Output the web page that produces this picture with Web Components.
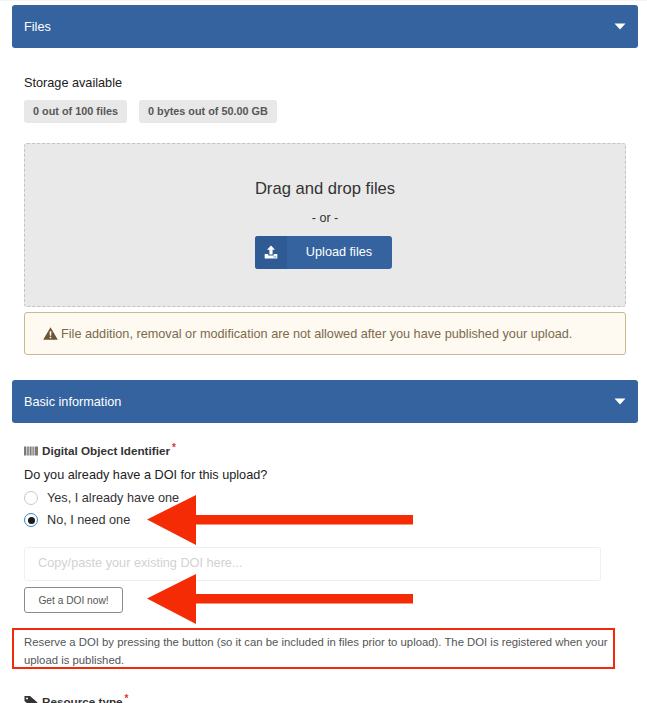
<!DOCTYPE html>
<html>
<head>
<meta charset="utf-8">
<style>
    html, body { margin: 0; height: 703px; overflow: hidden; background: #fff; }
    body { font-family: "Liberation Sans", Arial, sans-serif; font-size: 12.7px; color: #212121; }
</style>
</head>
<body>
<deposit-page>
    <section-bar>Files</section-bar>
    <plain-text top="28" height="15">Storage available</plain-text>
    <storage-badges>
        <grey-badge>0 out of 100 files</grey-badge>
        <grey-badge>0 bytes out of 50.00 GB</grey-badge>
    </storage-badges>
    <drop-zone></drop-zone>
    <warn-box>File addition, removal or modification are not allowed after you have published your upload.</warn-box>
    <section-bar style="margin-top:25px">Basic information</section-bar>
    <doi-field></doi-field>
    <field-label icon="tag" style="margin:25px 0 0 24px">Resource type</field-label>
    <red-arrow style="left:147px;top:495px"></red-arrow>
    <red-arrow style="left:147px;top:574px"></red-arrow>
</deposit-page>

<script>
class DepositPage extends HTMLElement {
    connectedCallback() {
        const shadowRoot = this.attachShadow({mode: 'open'});
        shadowRoot.innerHTML = `
            <style>
                :host { display: block; position: relative; padding-top: 5px; }
                #rule { position: absolute; top: 0; left: 0; right: 0; height: 1px; background: #f4f4f4; }
            </style>
            <div id="rule"></div>
            <slot></slot>
        `;
    }
}

class SectionBar extends HTMLElement {
    connectedCallback() {
        const shadowRoot = this.attachShadow({mode: 'open'});
        shadowRoot.innerHTML = `
            <style>
                :host {
                    display: flex;
                    align-items: center;
                    justify-content: space-between;
                    height: 43px;
                    margin: 0 9px 0 12px;
                    padding: 0 12px;
                    box-sizing: border-box;
                    background: #35639f;
                    border-radius: 3px;
                    color: #fff;
                    font-size: 12.7px;
                }
                svg { display: block; margin-top: -1px; }
            </style>
            <slot></slot>
            <svg width="12" height="7" viewBox="0 0 12 7"><path d="M0.5 0.5H11.5L6 6.5Z" fill="#fff"/></svg>
        `;
    }
}

class PlainText extends HTMLElement {
    connectedCallback() {
        const shadowRoot = this.attachShadow({mode: 'open'});
        shadowRoot.innerHTML = `
            <style>
                :host { display: block; margin: ${this.getAttribute('top')}px 0 0 24px; line-height: ${this.getAttribute('height')}px; color: #212121; }
            </style>
            <slot></slot>
        `;
    }
}

class StorageBadges extends HTMLElement {
    connectedCallback() {
        const shadowRoot = this.attachShadow({mode: 'open'});
        shadowRoot.innerHTML = `
            <style>
                :host { display: flex; gap: 12px; margin: 9px 0 0 24px; }
            </style>
            <slot></slot>
        `;
    }
}

class GreyBadge extends HTMLElement {
    connectedCallback() {
        const shadowRoot = this.attachShadow({mode: 'open'});
        shadowRoot.innerHTML = `
            <style>
                :host {
                    display: block;
                    height: 23px;
                    line-height: 23px;
                    padding: 0 9px;
                    background: #e8e8e8;
                    border-radius: 3px;
                    color: #575757;
                    font-size: 10.85px;
                    font-weight: bold;
                }
            </style>
            <slot></slot>
        `;
    }
}

class DropZone extends HTMLElement {
    connectedCallback() {
        const shadowRoot = this.attachShadow({mode: 'open'});
        shadowRoot.innerHTML = `
            <style>
                :host {
                    display: flex;
                    flex-direction: column;
                    align-items: center;
                    box-sizing: border-box;
                    height: 164px;
                    margin: 20px 21px 0 24px;
                    padding-top: 35px;
                    background: #e9e9e9;
                    border: 1px dashed #c4c4c4;
                    border-radius: 3px;
                }
                h3 { margin: 0; font-size: 16.6px; font-weight: normal; line-height: 20px; color: #333; }
                p { margin: 12px 0 0; font-size: 12.5px; line-height: 14px; color: #333; }
                button {
                    display: flex;
                    align-items: stretch;
                    width: 137px;
                    height: 33px;
                    margin: 11px 4px 0 0;
                    padding: 0;
                    border: 0;
                    border-radius: 3px;
                    overflow: hidden;
                    background: #35639f;
                    color: #fff;
                    font: 12.7px "Liberation Sans", Arial, sans-serif;
                }
                .ico { width: 32px; display: flex; align-items: center; justify-content: center; background: #2f5b94; }
                .ico svg { margin-top: -2px; }
                .txt { flex: 1; line-height: 33px; text-align: center; }
            </style>
            <h3>Drag and drop files</h3>
            <p>- or -</p>
            <button>
                <span class="ico">
                    <svg width="14" height="14" viewBox="0 0 14 14"><path fill="#fff" d="M7 0.5L11 4.8H8.6V9.6H5.4V4.8H3ZM0.7 9H4.2V10.6H9.8V9H13.3V13.4H0.7Z"/><rect x="9.6" y="11.4" width="1" height="1" fill="#35639f"/><rect x="11.2" y="11.4" width="1" height="1" fill="#35639f"/></svg>
                </span>
                <span class="txt">Upload files</span>
            </button>
        `;
    }
}

class WarnBox extends HTMLElement {
    connectedCallback() {
        const shadowRoot = this.attachShadow({mode: 'open'});
        shadowRoot.innerHTML = `
            <style>
                :host {
                    display: flex;
                    align-items: center;
                    gap: 3px;
                    box-sizing: border-box;
                    height: 43px;
                    margin: 5px 21px 0 24px;
                    padding-left: 18px;
                    background: #fef9f1;
                    border: 1px solid #c9b98d;
                    border-radius: 3px;
                    color: #7c6a4d;
                    font-size: 12.7px;
                }
                svg { flex: none; }
            </style>
            <svg width="15" height="13" viewBox="0 0 15 13"><path fill="#6b5632" fill-rule="evenodd" d="M7.5 0.3L14.8 12.8H0.2ZM6.6 4.3L6.8 8.8H8.2L8.4 4.3ZM6.7 9.7V11.2H8.3V9.7Z"/></svg>
            <span><slot></slot></span>
        `;
    }
}

class FieldLabel extends HTMLElement {
    connectedCallback() {
        const icons = {
            barcode: '<svg width="14" height="10" viewBox="0 0 14 10"><path fill="#7a7a7a" d="M0 0.5h2.4v9H0zM3.2 0.5h1.6v9H3.2zM5.6 0.5h2v9h-2zM8.4 0.5h1.4v9H8.4zM10.6 0.5h3.4v9h-3.4z"/></svg>',
            tag: '<svg width="14" height="13" viewBox="0 0 14 13"><path fill="#333" d="M0.5 1H6L13.5 7.5L8 12.5L0.5 6ZM3 2.6A1 1 0 1 0 3 4.6A1 1 0 1 0 3 2.6Z" fill-rule="evenodd"/></svg>'
        };
        const shadowRoot = this.attachShadow({mode: 'open'});
        shadowRoot.innerHTML = `
            <style>
                :host { display: flex; align-items: center; gap: 4px; height: 15px; font-size: 11.7px; font-weight: bold; color: #333; }
                sup { color: #d33; font-size: 10px; line-height: 0; position: relative; top: -3px; margin-left: -2px; }
            </style>
            ${icons[this.getAttribute('icon')]}
            <span><slot></slot></span><sup>*</sup>
        `;
    }
}

class RadioRow extends HTMLElement {
    connectedCallback() {
        const on = this.hasAttribute('checked');
        const shadowRoot = this.attachShadow({mode: 'open'});
        shadowRoot.innerHTML = `
            <style>
                :host { display: flex; align-items: center; gap: 9px; height: 22px; color: #333; }
                i {
                    box-sizing: border-box;
                    width: 14px;
                    height: 14px;
                    border-radius: 50%;
                    background: #fff;
                    border: 1px solid ${on ? '#3b82c4' : '#c9c9c9'};
                    display: flex;
                    align-items: center;
                    justify-content: center;
                }
                b { width: 7px; height: 7px; border-radius: 50%; background: #1a1a1a; display: ${on ? 'block' : 'none'}; }
            </style>
            <i><b></b></i>
            <slot></slot>
        `;
    }
}

class DoiField extends HTMLElement {
    connectedCallback() {
        const shadowRoot = this.attachShadow({mode: 'open'});
        shadowRoot.innerHTML = `
            <style>
                :host { display: block; padding: 20px 0 0 24px; }
                .question { margin-top: 10px; line-height: 15px; color: #212121; }
                .radios { margin-top: 4px; }
                .doi {
                    box-sizing: border-box;
                    width: 577px;
                    height: 34px;
                    margin-top: 16px;
                    padding-left: 13px;
                    border: 1px solid #efefef;
                    border-radius: 3px;
                    line-height: 31px;
                    color: #d2d2d2;
                }
                .btn {
                    box-sizing: border-box;
                    width: 99px;
                    height: 26px;
                    margin-top: 6px;
                    border: 1px solid #8a8a8a;
                    border-radius: 3px;
                    background: #fff;
                    color: #555;
                    font: 10.2px "Liberation Sans", Arial, sans-serif;
                    padding: 0;
                    display: block;
                }
                .note {
                    box-sizing: border-box;
                    width: 603px;
                    height: 41px;
                    margin: 15px 0 0 -12px;
                    padding: 3px 0 0 10px;
                    border: 2px solid #f5290a;
                    color: #555;
                    font-size: 11.33px;
                    line-height: 18px;
                }
            </style>
            <field-label icon="barcode">Digital Object Identifier</field-label>
            <div class="question">Do you already have a DOI for this upload?</div>
            <div class="radios">
                <radio-row>Yes, I already have one</radio-row>
                <radio-row checked>No, I need one</radio-row>
            </div>
            <div class="doi">Copy/paste your existing DOI here...</div>
            <button class="btn">Get a DOI now!</button>
            <div class="note">Reserve a DOI by pressing the button (so it can be included in files prior to upload). The DOI is registered when your upload is published.</div>
        `;
    }
}

class RedArrow extends HTMLElement {
    connectedCallback() {
        const shadowRoot = this.attachShadow({mode: 'open'});
        shadowRoot.innerHTML = `
            <style>
                :host { position: absolute; display: block; width: 266px; height: 50px; }
                svg { display: block; }
            </style>
            <svg width="266" height="50" viewBox="0 0 266 50"><path fill="#f52b06" d="M0 24.5L49 0V20H266V29.5H49V50Z"/></svg>
        `;
    }
}

try {
    customElements.define('deposit-page', DepositPage);
    customElements.define('section-bar', SectionBar);
    customElements.define('plain-text', PlainText);
    customElements.define('storage-badges', StorageBadges);
    customElements.define('grey-badge', GreyBadge);
    customElements.define('drop-zone', DropZone);
    customElements.define('warn-box', WarnBox);
    customElements.define('field-label', FieldLabel);
    customElements.define('radio-row', RadioRow);
    customElements.define('doi-field', DoiField);
    customElements.define('red-arrow', RedArrow);
} catch (err) {
    const d = document.createElement('div');
    d.innerHTML = "<span style='color: red'>Something went wrong</span>";
    document.body.appendChild(d);
}
</script>
</body>
</html>
